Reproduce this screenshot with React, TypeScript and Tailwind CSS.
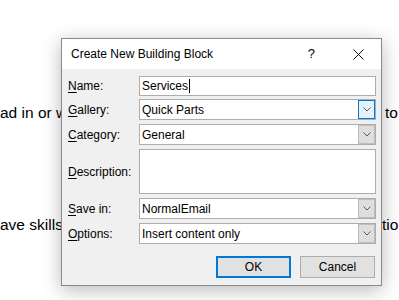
import type { ReactNode } from "react";

const UI_FONT = "font-['Liberation_Sans',Arial,sans-serif]";

function Chevron() {
  return (
    <svg width="8" height="5" viewBox="0 0 8 5" fill="none">
      <path d="M0.5 0.5 L4 4 L7.5 0.5" stroke="#5a5a5a" strokeWidth="1" />
    </svg>
  );
}

function Label({ hot, rest }: { hot: string; rest: string }) {
  return (
    <span className="w-[71px] shrink-0 text-[12px] text-black">
      <u className="underline-offset-2">{hot}</u>
      {rest}
    </span>
  );
}

function Row({ children, h }: { children: ReactNode; h: string }) {
  return <div className={`flex items-center ${h}`}>{children}</div>;
}

function Combo({ value, focused }: { value: string; focused?: boolean }) {
  return (
    <div className="flex h-full flex-1 border border-[#adadad] bg-white">
      <span className="flex flex-1 items-center pl-[2px] text-[12px] text-black">
        {value}
      </span>
      {focused ? (
        <span className="flex w-[17px] items-center justify-center border border-[#0078d7] bg-[#e5f1fb]">
          <Chevron />
        </span>
      ) : (
        <span className="flex w-[17px] items-center justify-center border border-[#bdbdbd] bg-[#dedede]">
          <Chevron />
        </span>
      )}
    </div>
  );
}

export default function App() {
  return (
    <div className="relative h-[300px] w-[399px] overflow-hidden bg-white">
      <div className="pt-[103px] font-['Liberation_Sans',Arial,sans-serif] text-[15.5px] leading-[20px] text-black">
        <div className="flex whitespace-nowrap">
          <span className="w-[385px] shrink-0">ad in or w</span>
          <span>to</span>
        </div>
        <div className="mt-[92px] flex whitespace-nowrap">
          <span className="w-[382px] shrink-0">ave skills</span>
          <span>tio</span>
        </div>
      </div>

      <div
        className={`absolute left-[61px] top-[38px] flex h-[248px] w-[321px] flex-col border border-[#8a8a8a] bg-[#f0f0f0] shadow-[0_4px_18px_rgba(0,0,0,0.28)] ${UI_FONT}`}
      >
        <div className="flex h-[30px] items-center bg-white pl-[9px]">
          <span className="flex-1 text-[12px] text-black">
            Create New Building Block
          </span>
          <span className="mr-[36px] text-[13px] text-black">?</span>
          <span className="mr-[15px] flex w-[15px] justify-center">
            <svg width="11" height="11" viewBox="0 0 11 11">
              <path d="M0.5 0.5 L10.5 10.5 M10.5 0.5 L0.5 10.5" stroke="#111" strokeWidth="1" />
            </svg>
          </span>
        </div>

        <div className="flex flex-1 flex-col pl-[6px] pr-[5px] pt-[7px]">
          <Row h="h-[20px]">
            <Label hot="N" rest="ame:" />
            <div className="flex h-full flex-1 items-center border border-[#adadad] bg-white pl-[2px] text-[12px] text-black">
              Services
              <span className="ml-[1px] h-[14px] w-px bg-black" />
            </div>
          </Row>
          <div className="mt-[3px]">
            <Row h="h-[21px]">
              <Label hot="G" rest="allery:" />
              <Combo value="Quick Parts" focused />
            </Row>
          </div>
          <div className="mt-[4px]">
            <Row h="h-[21px]">
              <Label hot="C" rest="ategory:" />
              <Combo value="General" />
            </Row>
          </div>
          <div className="mt-[4px]">
            <Row h="h-[45px]">
              <Label hot="D" rest="escription:" />
              <div className="h-full flex-1 border border-[#adadad] bg-white" />
            </Row>
          </div>
          <div className="mt-[4px]">
            <Row h="h-[21px]">
              <Label hot="S" rest="ave in:" />
              <Combo value="NormalEmail" />
            </Row>
          </div>
          <div className="mt-[4px]">
            <Row h="h-[21px]">
              <Label hot="O" rest="ptions:" />
              <Combo value="Insert content only" />
            </Row>
          </div>

          <div className="mt-[12px] flex justify-end gap-[9px] pr-[1px]">
            <button className="h-[22px] w-[75px] border-2 border-[#0078d7] bg-[#e1e1e1] text-[12px] text-black">
              OK
            </button>
            <button className="h-[22px] w-[75px] border border-[#adadad] bg-[#e1e1e1] text-[12px] text-black">
              Cancel
            </button>
          </div>
        </div>
      </div>
    </div>
  );
}
